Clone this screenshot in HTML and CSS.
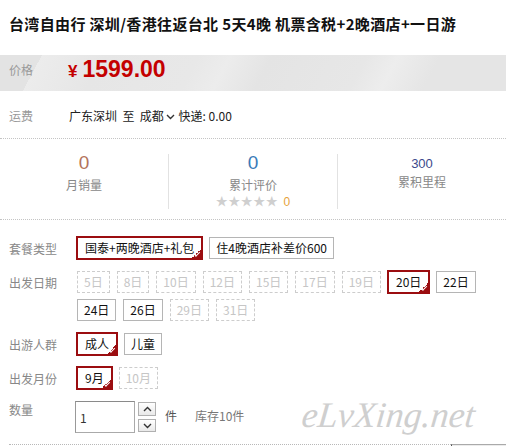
FILE: index.html
```html
<!DOCTYPE html>
<html lang="zh-CN">
<head>
  <meta charset="UTF-8">
  <meta name="viewport" content="width=device-width, initial-scale=1.0">
  <title>台湾自由行 深圳/香港往返台北</title>
  <link rel="stylesheet" href="styles.css">
</head>
<body>
  <div class="detail">
    <h1 class="title">台湾自由行 深圳/香港往返台北 5天4晚 机票含税+2晚酒店+一日游</h1>

    <div class="price-bar">
      <span class="label">价格</span>
      <span class="price"><em>¥</em>1599.00</span>
    </div>

    <div class="ship">
      <span class="label">运费</span>
      <span class="ship-text">广东深圳&nbsp; 至&nbsp; 成都<svg class="caret" width="9" height="6" viewBox="0 0 9 6"><polyline points="1,1 4.5,4.5 8,1" fill="none" stroke="#333" stroke-width="1.4"/></svg> 快递: 0.00</span>
    </div>

    <div class="stats">
      <div class="stat">
        <div class="num sales">0</div>
        <div class="cap">月销量</div>
      </div>
      <div class="stat">
        <div class="num rates">0</div>
        <div class="cap">累计评价</div>
        <div class="stars">★★★★★ <span>0</span></div>
      </div>
      <div class="stat miles">
        <div class="num">300</div>
        <div class="cap">累积里程</div>
      </div>
    </div>

    <div class="sku">
      <div class="sku-row">
        <span class="label">套餐类型</span>
        <ul class="opts">
          <li class="opt sel">国泰+两晚酒店+礼包</li>
          <li class="opt">住4晚酒店补差价600</li>
        </ul>
      </div>
      <div class="sku-row">
        <span class="label">出发日期</span>
        <ul class="opts">
          <li class="opt off">5日</li>
          <li class="opt off">8日</li>
          <li class="opt off">10日</li>
          <li class="opt off">12日</li>
          <li class="opt off">15日</li>
          <li class="opt off">17日</li>
          <li class="opt off">19日</li>
          <li class="opt sel">20日</li>
          <li class="opt">22日</li>
          <li class="opt">24日</li>
          <li class="opt">26日</li>
          <li class="opt off">29日</li>
          <li class="opt off">31日</li>
        </ul>
      </div>
      <div class="sku-row">
        <span class="label">出游人群</span>
        <ul class="opts">
          <li class="opt sel">成人</li>
          <li class="opt">儿童</li>
        </ul>
      </div>
      <div class="sku-row">
        <span class="label">出发月份</span>
        <ul class="opts">
          <li class="opt sel">9月</li>
          <li class="opt off">10月</li>
        </ul>
      </div>
      <div class="qty-row">
        <span class="label">数量</span>
        <input class="qty" type="text" value="1">
        <div class="spin">
          <button class="spin-btn up"><svg width="9" height="6" viewBox="0 0 9 6"><polyline points="1,5 4.5,1.5 8,5" fill="none" stroke="#333" stroke-width="1.4"/></svg></button>
          <button class="spin-btn down"><svg width="9" height="6" viewBox="0 0 9 6"><polyline points="1,1 4.5,4.5 8,1" fill="none" stroke="#333" stroke-width="1.4"/></svg></button>
        </div>
        <span class="unit">件</span>
        <span class="stock">库存10件</span>
      </div>
      <div class="foot">
        <div class="dots"></div>
        <div class="edge"></div>
      </div>
    </div>

    <div class="watermark">eLvXing.net</div>
  </div>
</body>
</html>
```

FILE: styles.css
```css
* { box-sizing: border-box; }
body { margin: 0; background: #fff; font-family: "Noto Sans CJK SC", "Liberation Sans", sans-serif; font-size: 12px; color: #333; }
.detail { position: relative; width: 506px; height: 446px; overflow: hidden; }

.title { margin: 0; height: 55px; padding: 14px 0 0 9px; font-size: 15px; line-height: 20px; font-weight: bold; color: #111; white-space: nowrap; letter-spacing: 0.35px; }

.label { flex: none; color: #999; }

.price-bar { display: flex; align-items: center; height: 36px; padding: 0 0 6px 9px;
  background: linear-gradient(118deg, #e3e3e3 0, #e3e3e3 8%, #ececec 8%, #e6e6e6 20%, #e8e8e8 38%, #ececec 44%, #e4e4e4 52%, #e7e7e7 70%, #ededed 76%, #e5e5e5 84%, #e5e5e5 100%); }
.price-bar .label { width: 59px; line-height: 20px; }
.price { font-family: "Liberation Sans", sans-serif; font-size: 23px; font-weight: bold; color: #c40000; line-height: 24px; }
.price em { font-style: normal; font-size: 17px; margin-right: 5px; }

.ship { display: flex; margin: 15px 0 12px; padding-left: 9px; line-height: 20px; }
.ship .label { width: 60px; }
.ship-text { color: #222; }
.caret { margin: 0 1px 1px 2px; vertical-align: middle; }

.stats { display: flex; padding: 15px 0 10px; border-top: 1px dotted #c4c4c4; border-bottom: 1px dotted #c4c4c4; }
.stat { flex: 1; height: 55px; text-align: center; }
.stat + .stat { border-left: 1px solid #e2e2e2; }
.num { font-family: "Liberation Sans", sans-serif; font-size: 19px; line-height: 18px; }
.sales { color: #b4745a; }
.rates { color: #3a7bb8; }
.cap { margin-top: 4px; line-height: 18px; color: #888; }
.stars { line-height: 14px; font-size: 12px; color: #cfcfcf; letter-spacing: 0.5px; }
.stars span { color: #e6a23c; font-family: "Liberation Sans", sans-serif; letter-spacing: 0; margin-left: 2px; }
.miles { padding-top: 1px; }
.miles .num { font-size: 13px; color: #3c4a8c; }
.miles .cap { margin-top: 0; }

.sku { padding: 16px 0 0 9px; }
.sku-row { display: flex; margin-bottom: 10px; }
.sku .label { width: 67px; padding-top: 2px; line-height: 22px; color: #888; }
.opts { display: flex; flex-wrap: wrap; gap: 4px 5px; margin: 0; padding: 0; list-style: none; }
.opt { position: relative; margin: 1px; padding: 0 6px; border: 1px solid #b5b5b5; line-height: 20px; color: #111; white-space: nowrap; }
.opt.off { border: 1px dashed #cdcdcd; color: #c6c6c6; }
.opt.sel { margin: 0; padding: 0 7px; border: 2px solid #9b0d10; }
.opt.sel::after { content: ""; position: absolute; right: -1px; bottom: -1px; width: 11px; height: 11px; background: linear-gradient(135deg, transparent 50%, #9b0d10 50%); }
.opt.sel::before { content: ""; position: absolute; z-index: 1; right: 1px; bottom: 3px; width: 5px; height: 2px; border-left: 1px solid #fff; border-bottom: 1px solid #fff; transform: rotate(-45deg); }

.qty-row { display: flex; align-items: flex-start; height: 33px; }
.qty-row .label { width: 66px; padding-top: 0; line-height: 20px; }
.qty { width: 60px; height: 32px; margin: 1px 0 0; padding: 0 0 0 4px; border: 1px solid #aaa; border-top-color: #8a8a8a; border-left-color: #999; font: 12px "Noto Sans CJK SC", sans-serif; color: #333; }
.spin { display: flex; flex-direction: column; gap: 3px; margin: 2px 0 0 3px; }
.spin-btn { display: flex; align-items: center; justify-content: center; width: 18px; height: 14px; padding: 0; border: 1px solid #b0b0b0; background: linear-gradient(#fff, #e9e9e9); }
.spin-btn.down { height: 13px; }
.unit { margin-left: 9px; line-height: 32px; color: #555; }
.stock { margin-left: 18px; line-height: 32px; color: #777; }

.foot { display: flex; margin-top: 11px; }
.dots { flex: 1; border-top: 1px dotted #b8b8b8; }
.edge { width: 55px; height: 10px; border-top: 1px solid #aaa; border-left: 1px solid #555; background: #ececec; }

.watermark { position: absolute; left: 302px; top: 393px; font-family: "Liberation Serif", serif; font-style: italic; font-size: 36px; line-height: 44px; color: #cfcfcf; transform: skewX(-6deg); }
```
